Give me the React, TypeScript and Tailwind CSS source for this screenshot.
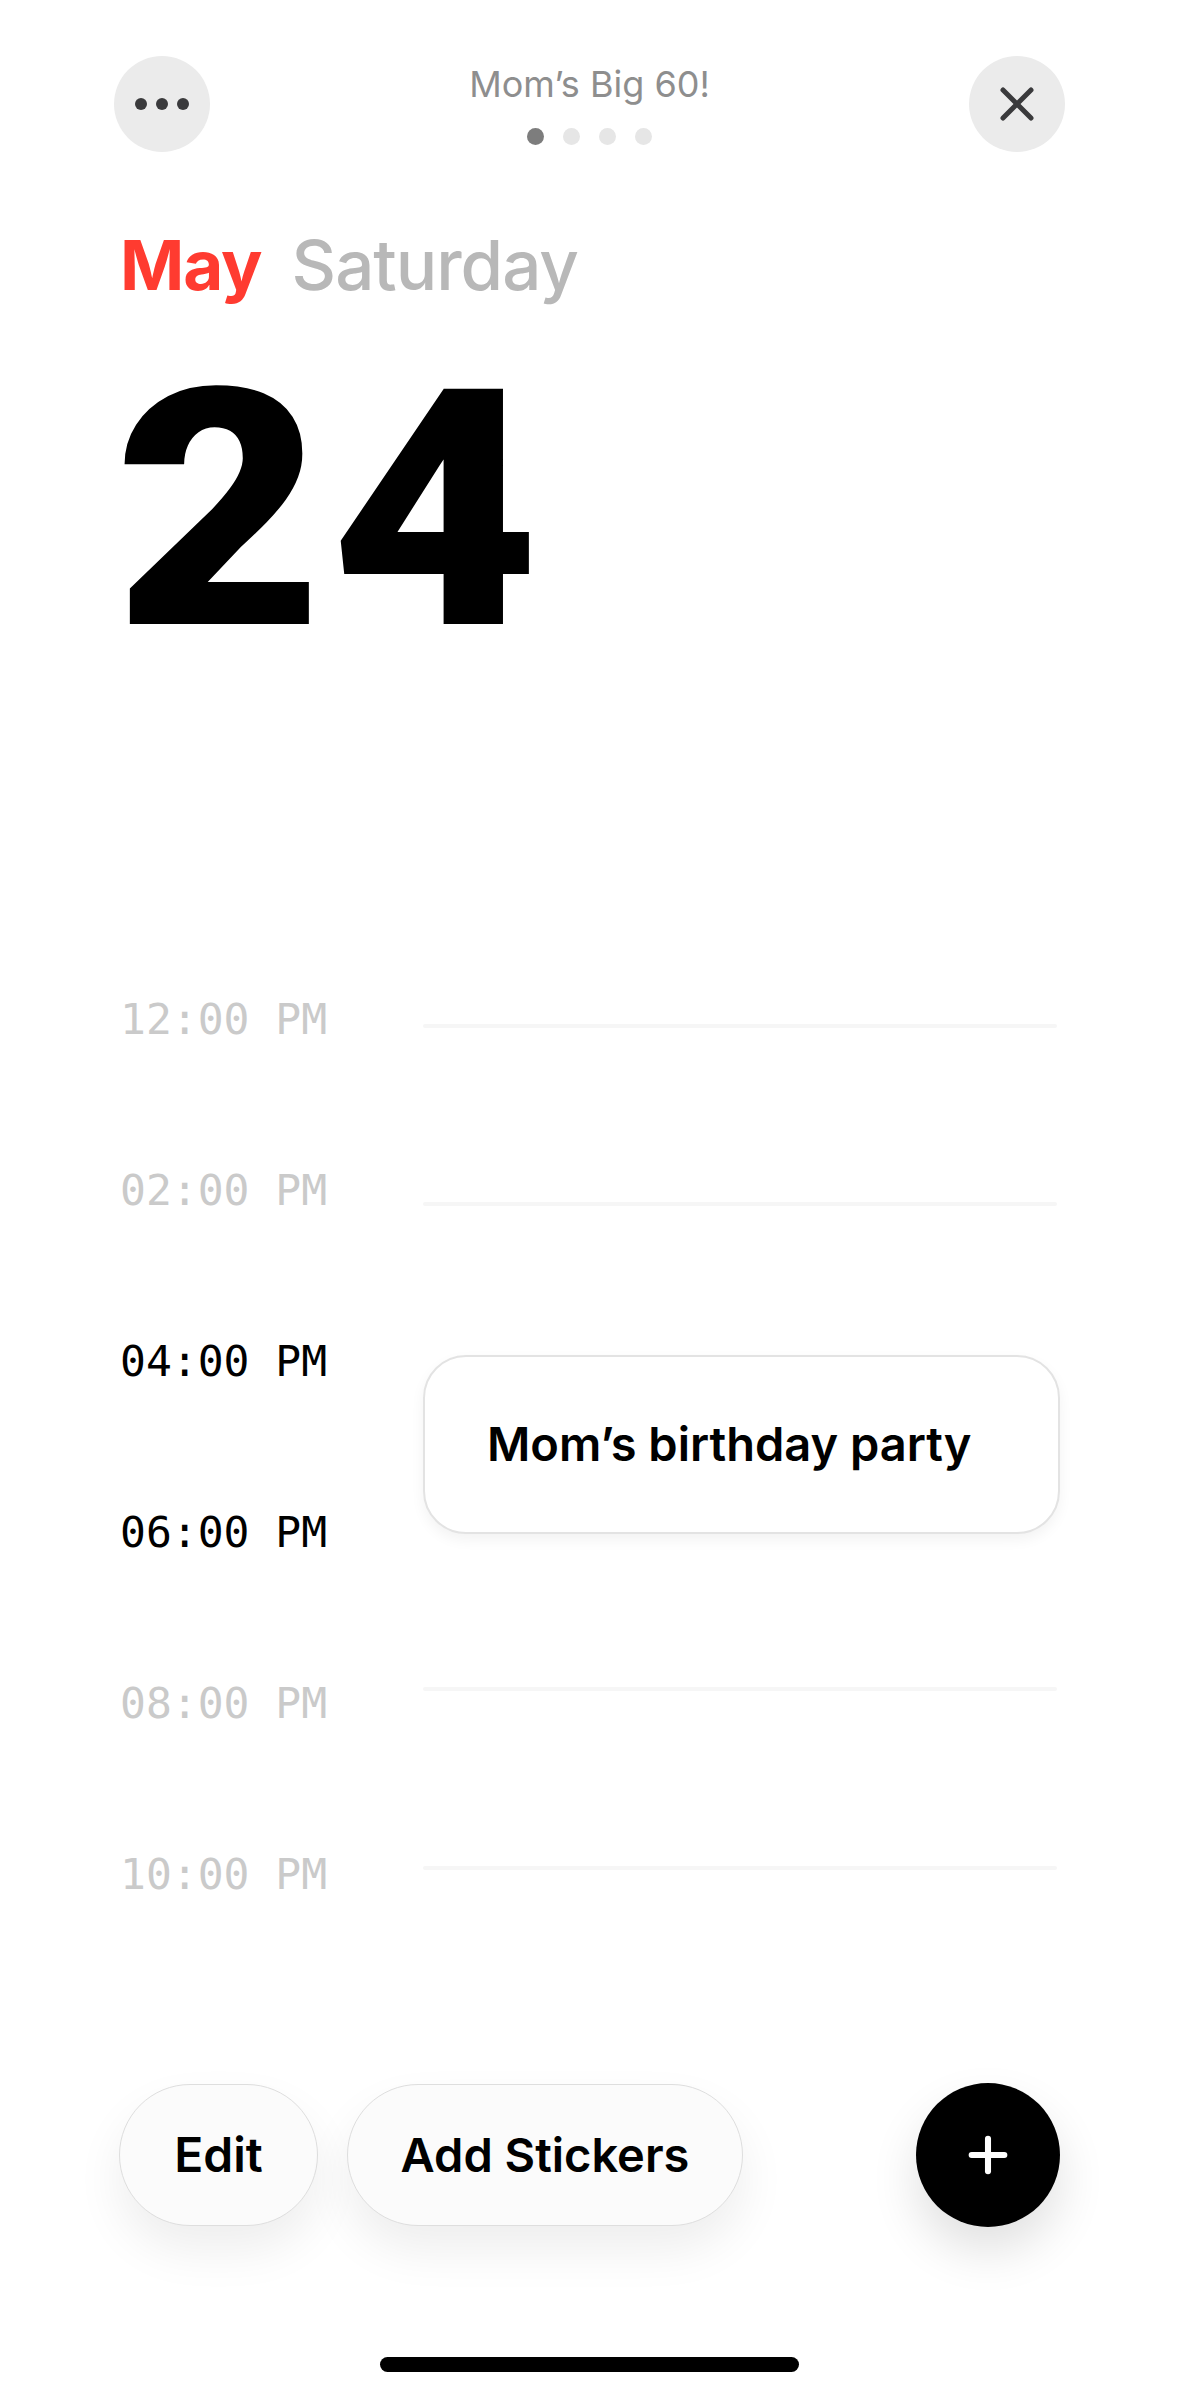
import { Plus } from 'lucide-react';

type Slot = { label: string; active: boolean; lineTop: number | null };

// lineTop = where the faint hour rule sits inside its row (px from row top)
const slots: Slot[] = [
  { label: '12:00 PM', active: false, lineTop: 26 },
  { label: '02:00 PM', active: false, lineTop: 33 },
  { label: '04:00 PM', active: true, lineTop: null },
  { label: '06:00 PM', active: true, lineTop: null },
  { label: '08:00 PM', active: false, lineTop: 5 },
  { label: '10:00 PM', active: false, lineTop: 13 },
];

function MoreIcon() {
  return (
    <svg width="54" height="12" viewBox="0 0 54 12" aria-hidden="true">
      <circle cx="6" cy="6" r="6" fill="#3a3a3c" />
      <circle cx="27" cy="6" r="6" fill="#3a3a3c" />
      <circle cx="48" cy="6" r="6" fill="#3a3a3c" />
    </svg>
  );
}

function CloseIcon() {
  return (
    <svg width="36" height="36" viewBox="0 0 36 36" aria-hidden="true">
      <path
        d="M4 4 L32 32 M32 4 L4 32"
        stroke="#3a3a3c"
        strokeWidth="5"
        strokeLinecap="round"
      />
    </svg>
  );
}

export default function App() {
  return (
    <div className="flex h-[2396px] w-[1179px] flex-col overflow-hidden bg-white font-['Inter',sans-serif]">
      {/* header */}
      <div className="flex items-start justify-between px-[114px] pt-[56px]">
        <button
          type="button"
          className="flex h-[96px] w-[96px] items-center justify-center rounded-full bg-[#ebebeb]"
          aria-label="More"
        >
          <MoreIcon />
        </button>

        <div className="mt-[10px] flex flex-col items-center">
          <h1 className="text-[36px] leading-none text-[#8e8e8e]">Mom’s Big 60!</h1>
          <div className="mt-[26px] flex gap-[19px]">
            <span className="h-[17px] w-[17px] rounded-full bg-[#7d7d7d]" />
            <span className="h-[17px] w-[17px] rounded-full bg-[#e6e6e6]" />
            <span className="h-[17px] w-[17px] rounded-full bg-[#e6e6e6]" />
            <span className="h-[17px] w-[17px] rounded-full bg-[#e6e6e6]" />
          </div>
        </div>

        <button
          type="button"
          className="flex h-[96px] w-[96px] items-center justify-center rounded-full bg-[#ebebeb]"
          aria-label="Close"
        >
          <CloseIcon />
        </button>
      </div>

      {/* date */}
      <div className="mt-[79px] flex h-[69px] gap-[30px] pl-[120px] text-[69px] leading-none tracking-[-0.015em]">
        <span className="font-bold text-[#ff3b30]">May</span>
        <span className="font-medium text-[#b8b8b8]">Saturday</span>
      </div>

      <div className="mt-[46px] h-[331px] -ml-[6px] pl-[120px]">
        <div className="origin-left scale-x-[1.09] font-['Roboto',sans-serif] text-[331px] font-black leading-none tracking-[0.02em] text-black">
          24
        </div>
      </div>

      {/* timeline */}
      <div className="relative mt-[321px] px-[120px]">
        {slots.map((slot) => (
          <div key={slot.label} className="flex h-[171px] items-start">
            <span
              className={`w-[303px] shrink-0 font-['DejaVu_Sans_Mono',monospace] text-[43px] leading-none ${
                slot.active ? 'text-black' : 'text-[#cacaca]'
              }`}
            >
              {slot.label}
            </span>
            {slot.lineTop !== null && (
              <div className="flex-1 pr-[2px]" style={{ paddingTop: slot.lineTop }}>
                <div className="h-[4px] rounded-full bg-[#f6f6f6]" />
              </div>
            )}
          </div>
        ))}

        <div className="absolute left-[423px] top-[357px] flex h-[179px] w-[637px] items-center rounded-[43px] border-2 border-[#e3e3e3] bg-white pl-[62px] shadow-[0_6px_14px_rgba(0,0,0,0.05)]">
          <span className="text-[47px] font-semibold text-black">
            Mom’s birthday party
          </span>
        </div>
      </div>

      {/* bottom actions */}
      <div className="mt-[59px] flex items-center px-[119px]">
        <button
          type="button"
          className="h-[142px] w-[199px] rounded-full border border-[#dedede] bg-[#fbfbfb] text-[48px] font-semibold text-black shadow-[0_24px_48px_rgba(0,0,0,0.07)]"
        >
          Edit
        </button>
        <button
          type="button"
          className="ml-[29px] h-[142px] w-[396px] rounded-full border border-[#dedede] bg-[#fbfbfb] text-[47px] font-semibold text-black shadow-[0_24px_48px_rgba(0,0,0,0.07)]"
        >
          Add Stickers
        </button>
        <button
          type="button"
          className="ml-auto flex h-[144px] w-[144px] items-center justify-center rounded-full bg-black shadow-[0_24px_48px_rgba(0,0,0,0.12)]"
          aria-label="Add"
        >
          <Plus className="h-[56px] w-[56px] text-white" strokeWidth={2.6} />
        </button>
      </div>

      {/* home indicator */}
      <div className="mt-[130px] flex justify-center">
        <div className="h-[15px] w-[419px] rounded-full bg-black" />
      </div>
    </div>
  );
}
